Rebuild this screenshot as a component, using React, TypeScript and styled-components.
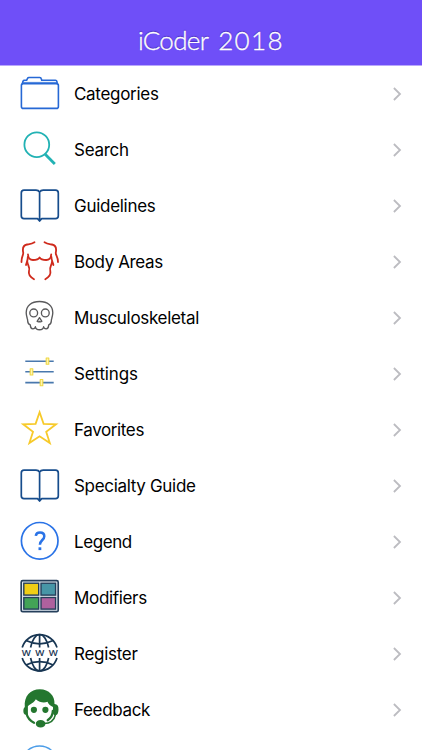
import React from 'react';
import styled, { createGlobalStyle } from 'styled-components';

const GlobalStyle = createGlobalStyle`
  html, body { margin: 0; background: #fff; }
  body { overflow: hidden; }
`;

const Screen = styled.main`
  display: flex;
  flex-direction: column;
  width: 422px;
  height: 750px;
  overflow: hidden;
  background: #fff;
`;

const Header = styled.header`
  box-sizing: border-box;
  flex: none;
  display: flex;
  justify-content: center;
  height: 66px;
  padding-top: 24px;
  background: #6f4ff8;
  border-bottom: 1px solid #b9a8fb;
`;

const Title = styled.h1`
  display: flex;
  gap: 10px;
  margin: 0;
  font: 300 26px/32px Lato, 'Open Sans', sans-serif;
  color: #fff;
  -webkit-text-stroke: 0.35px #fff;
  text-shadow: 0 -1px 1px rgba(40, 20, 130, 0.6);
`;

const Word = styled.span<{ $spacing: number }>`
  letter-spacing: ${(p) => p.$spacing}px;
`;

const List = styled.ul`
  margin: 0;
  padding: 0;
  list-style: none;
`;

const Row = styled.li`
  display: flex;
  align-items: center;
  height: 56px;
  padding: 0 20px 0 10px;
`;

const Icon = styled.svg`
  flex: none;
  width: 60px;
  height: 56px;
  fill: none;
  stroke-linecap: round;
  stroke-linejoin: round;
`;

const Label = styled.span<{ $spacing: number }>`
  flex: 1;
  padding-left: 4px;
  font: 400 17px/24px Inter, sans-serif;
  letter-spacing: ${(p) => p.$spacing}px;
  color: #000;
`;

const Chevron = styled.svg`
  flex: none;
  width: 10px;
  height: 14px;
  fill: none;
  stroke: #bcbcc1;
  stroke-width: 1.8;
`;

const Book = () => (
  <g stroke="#164c8c" strokeWidth="1.7">
    <path d="M29.6 14.2Q28.5 12.2 26 12.2H14Q11.3 12.2 11.3 15V38Q11.3 40.6 14 40.6H27.5L29.6 43L31.7 40.6H45.5Q48.3 40.6 48.3 38V15Q48.3 12.2 45.5 12.2H33.2Q30.7 12.2 29.6 14.2V42.5" />
  </g>
);

const Folder = () => (
  <g stroke="#2668d5" strokeWidth="1.6">
    <rect x="11.4" y="17.6" width="37" height="24.8" rx="2" />
    <path d="M12.3 17.6L13 15.2Q13.3 14.3 14.5 14.3H16.6L17.5 12.4Q17.9 11.5 19 11.5H29.8Q31 11.5 31.2 12.5L31.7 14.3H45.5Q46.6 14.3 46.8 15.2L47.3 17.6" />
    <path d="M13.5 16.4H46.5" strokeWidth=".8" />
  </g>
);

const Magnifier = () => (
  <g stroke="#22b2b4">
    <circle cx="26.8" cy="22.7" r="12.4" strokeWidth="1.8" />
    <path d="M35.2 32.2L44.8 42" strokeWidth="2.8" strokeLinecap="butt" />
  </g>
);

const Torso = () => (
  <g stroke="#cf2a1c" strokeWidth="1.8">
    <path d="M24.5 8.2C22 9.9 19.8 10 17 10.5C13.2 11.3 12.3 14.2 13.2 18.5C13.7 21 11.3 22.5 11.5 28" />
    <path d="M34.5 8.2C37 9.9 39.2 10 42 10.5C45.8 11.3 46.7 14.2 45.8 18.5C45.3 21 48 22.5 48 28" />
    <path d="M18 20.5C18.2 23.5 19.7 26 23 26C26 26 28.5 25.5 29.6 23.5C30.7 25.5 33.2 26 36.2 26C39.5 26 41 23.5 41.2 20.5" />
    <path d="M17.8 23C17.9 26.5 16.5 28.3 16 31M17.3 27.5C17.3 31 20.5 33 19 37C18.1 40.5 20.2 43 24 45.2" />
    <path d="M41.4 23C41.3 26.5 43 28.3 43.4 31M42 27.5C42 31 39.1 33 40.3 37C41.2 40.5 39 43 35.3 45.2" />
  </g>
);

const Skull = () => (
  <g stroke="#59595b" strokeWidth="1.35">
    <path d="M20.3 34.8C16.7 33.8 18.2 31.3 17.4 29C16.7 26.5 16.2 25 16.2 22.8C16.2 15.7 21.5 11.5 29.5 11.5S42.8 15.7 42.8 22.8C42.8 25 42.3 26.5 41.6 29C40.8 31.3 42.3 33.8 38.7 34.8C38.5 37 38.8 38.7 36.2 38.8C34.3 38.8 33.7 37.8 33.6 36.7C33.4 38.8 32.2 39.7 29.5 39.7S25.6 38.8 25.4 36.7C25.3 37.8 24.7 38.8 22.8 38.8C20.2 38.7 20.5 37 20.3 34.8Z" />
    <circle cx="23.7" cy="22.9" r="3.9" />
    <circle cx="35.3" cy="22.9" r="3.9" />
    <path d="M29.5 27.6L27.1 31.3Q28.3 32.3 29.5 31.4Q30.7 32.3 31.9 31.3Z" />
  </g>
);

const Sliders = () => (
  <g strokeLinecap="butt">
    <path d="M15.3 15.2H43.7M15.3 25.8H43.7M15.3 36.6H43.7" stroke="#4978ad" strokeWidth="1.6" />
    <g fill="#fff5b0" stroke="#efd844" strokeWidth="1.1">
      <rect x="36.2" y="12" width="2.6" height="6.2" />
      <rect x="20.2" y="22.8" width="2.6" height="6.2" />
      <rect x="30.2" y="33.5" width="2.6" height="6.2" />
    </g>
  </g>
);

const Star = () => (
  <path
    d="M29.6 10.3L33.6 21.9L46 22.3L36.2 29.8L39.8 41L29.6 34.3L19.4 41L23 29.8L13.2 22.3L25.6 21.9Z"
    stroke="#f7ca2a"
    strokeWidth="1.8"
    strokeLinejoin="miter"
  />
);

const Question = () => (
  <g stroke="#2a73e7">
    <circle cx="29.7" cy="26.8" r="18.3" strokeWidth="1.7" />
    <path d="M25.8 21.8C26.1 19.4 27.7 18.4 30 18.4C32.6 18.4 34.3 19.8 34.3 22.2C34.3 26 30 26.1 29.9 30.8" strokeWidth="2.5" strokeLinecap="butt" />
    <rect x="28.5" y="33.3" width="2.8" height="2.8" fill="#2a73e7" stroke="none" />
  </g>
);

const Tiles = () => (
  <g stroke="#253f5b">
    <rect x="11.2" y="10.7" width="37" height="31" rx="1.5" fill="#e9f0f7" strokeWidth="1.7" />
    <g strokeWidth="1.4" strokeLinejoin="miter">
      <rect x="13.8" y="13.2" width="14.9" height="11.9" fill="#f0ce16" />
      <rect x="31" y="13.2" width="14.6" height="11.9" fill="#4796a7" />
      <rect x="13.8" y="27.5" width="14.9" height="11.6" fill="#43a357" />
      <rect x="31" y="27.5" width="14.6" height="11.6" fill="#ae619e" />
    </g>
  </g>
);

const Globe = () => (
  <g stroke="#183653" strokeWidth="1.7" strokeLinecap="butt">
    <path d="M12.2 21.5A18.2 18.2 0 0 1 47 21.5M12.2 32A18.2 18.2 0 0 0 47 32" />
    <path d="M20.6 21.5C22 14.3 25.6 8.5 29.6 8.5S37.2 14.3 38.6 21.5M20.6 32C22 39.2 25.6 45 29.6 45S37.2 39.2 38.6 32" />
    <path d="M29.6 8.5V21.5M29.6 32V45" />
    <path d="M16 14.6Q29.6 21.2 43.2 14.6M16 38.9Q29.6 32.3 43.2 38.9" />
    <g fontFamily="Open Sans, sans-serif" fontSize="9.6" fontWeight="600" textAnchor="middle" fill="#183653" stroke="none">
      <text x="16.2" y="30.2">W</text>
      <text x="29.7" y="30.2">W</text>
      <text x="43.2" y="30.2">W</text>
    </g>
  </g>
);

const Agent = () => (
  <g>
    <path d="M14.8 25C13.7 14 20.5 7.2 29.8 7.2S45 14 44.5 22C47.5 22.2 48.7 24 48.5 27.5C48.3 31.5 47.5 33.2 44.5 33.5L43 31.5V25C40.5 23.8 38.5 22.5 37.5 19.8C34 21.2 29.5 20.5 25.8 17.3C24.5 20.5 20.5 21.8 17.9 24.2V33L14.8 32.5C12.8 31 13 26.3 14.8 25Z" fill="#24762f" />
    <path d="M16.5 31.8C17.5 35.5 20.2 39 24 40.8M42.8 29C42.8 32.7 40.5 36.2 37.7 38.2" stroke="#24762f" strokeWidth="2.3" />
    <path d="M45.5 32.5C44.2 38.3 40.5 41.5 34 41.5" stroke="#24762f" strokeWidth="1.5" />
    <circle cx="23.9" cy="27.8" r="3.1" fill="#24762f" />
    <circle cx="35.4" cy="27.8" r="3.1" fill="#24762f" />
    <ellipse cx="30.6" cy="41.7" rx="4.8" ry="3.8" fill="#24762f" />
  </g>
);

const Ring = () => <circle cx="29.6" cy="26.3" r="18.3" stroke="#4c9de8" strokeWidth="1.3" />;

const items: { label: string; spacing: number; icon: React.ReactNode }[] = [
  { label: 'Categories', spacing: -0.3, icon: <Folder /> },
  { label: 'Search', spacing: -0.28, icon: <Magnifier /> },
  { label: 'Guidelines', spacing: -0.28, icon: <Book /> },
  { label: 'Body Areas', spacing: -0.38, icon: <Torso /> },
  { label: 'Musculoskeletal', spacing: -0.31, icon: <Skull /> },
  { label: 'Settings', spacing: -0.17, icon: <Sliders /> },
  { label: 'Favorites', spacing: -0.38, icon: <Star /> },
  { label: 'Specialty Guide', spacing: -0.32, icon: <Book /> },
  { label: 'Legend', spacing: -0.42, icon: <Question /> },
  { label: 'Modifiers', spacing: -0.33, icon: <Tiles /> },
  { label: 'Register', spacing: -0.28, icon: <Globe /> },
  { label: 'Feedback', spacing: -0.33, icon: <Agent /> },
];

export default function App() {
  return (
    <>
      <GlobalStyle />
      <Screen>
        <Header>
          <Title>
            <Word $spacing={-0.7}>iCoder</Word>
            <Word $spacing={1.4}>2018</Word>
          </Title>
        </Header>
        <List>
          {items.map((item) => (
            <Row key={item.label}>
              <Icon viewBox="0 0 60 56">{item.icon}</Icon>
              <Label $spacing={item.spacing}>{item.label}</Label>
              <Chevron viewBox="0 0 10 14">
                <path d="M1.9 1L8 7L1.9 13" />
              </Chevron>
            </Row>
          ))}
          <Row>
            <Icon viewBox="0 0 60 56"><Ring /></Icon>
          </Row>
        </List>
      </Screen>
    </>
  );
}
